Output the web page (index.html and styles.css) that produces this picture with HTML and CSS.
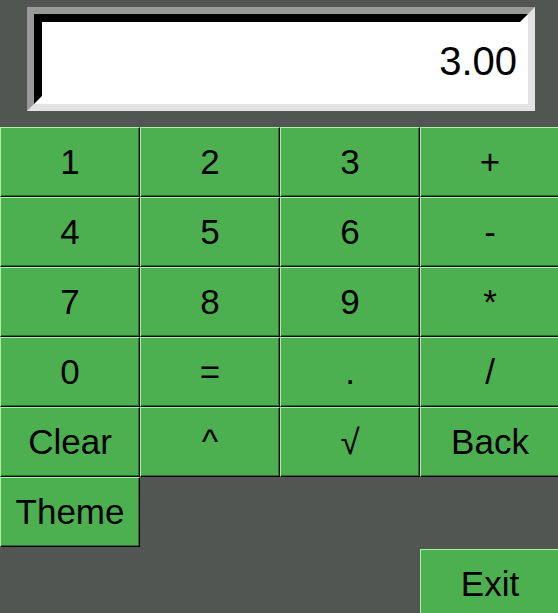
FILE: index.html
```html
<!DOCTYPE html>
<html>
<head>
<meta charset="utf-8">
<title>Calculator</title>
<link rel="stylesheet" href="styles.css">
</head>
<body>
<div class="app">
  <div class="display-wrap">
    <div class="display">
      <div class="display-inner">3.00</div>
    </div>
  </div>
  <div class="keys">
    <div class="key">1</div>
    <div class="key">2</div>
    <div class="key">3</div>
    <div class="key">+</div>
    <div class="key">4</div>
    <div class="key">5</div>
    <div class="key">6</div>
    <div class="key">-</div>
    <div class="key">7</div>
    <div class="key">8</div>
    <div class="key">9</div>
    <div class="key">*</div>
    <div class="key">0</div>
    <div class="key">=</div>
    <div class="key">.</div>
    <div class="key">/</div>
    <div class="key">Clear</div>
    <div class="key">^</div>
    <div class="key root">√</div>
    <div class="key">Back</div>
    <div class="key theme">Theme</div>
    <div class="key exit">Exit</div>
  </div>
</div>
</body>
</html>
```
FILE: styles.css
```css
html, body {
  margin: 0;
  padding: 0;
  background: #525652;
}

body {
  width: 558px;
  height: 613px;
  overflow: hidden;
  font-family: "Liberation Sans", Arial, sans-serif;
}

.app {
  display: flex;
  flex-direction: column;
}

.display-wrap {
  padding: 7px 23px 0 27px;
  height: 104px;
  margin-bottom: 16px;
}

.display {
  box-sizing: border-box;
  height: 104px;
  border: 7px solid;
  border-color: #999999 #e3e3e3 #e3e3e3 #999999;
}

.display-inner {
  box-sizing: border-box;
  height: 100%;
  border: 8px solid;
  border-color: #000000 #ffffff #ffffff #000000;
  background: #ffffff;
  display: flex;
  align-items: center;
  justify-content: flex-end;
  padding: 5px 3px 0 0;
  font-size: 40px;
  color: #000000;
}

.keys {
  display: grid;
  grid-template-columns: repeat(4, 140px);
  grid-template-rows: repeat(6, 70px) 72px;
  width: 560px;
}

.key {
  box-sizing: border-box;
  background: #4caf50;
  border-style: solid;
  border-width: 1px;
  border-color: #a5f5a7 #000000 #000000 #a5f5a7;
  box-shadow: inset -1px -1px 0 #2d6930;
  display: flex;
  align-items: center;
  justify-content: center;
  font-size: 35px;
  color: #000000;
  height: 70px;
}

.theme {
  grid-column: 1;
  grid-row: 6;
}

.exit {
  grid-column: 4;
  grid-row: 7;
  margin-top: 2px;
}
```
